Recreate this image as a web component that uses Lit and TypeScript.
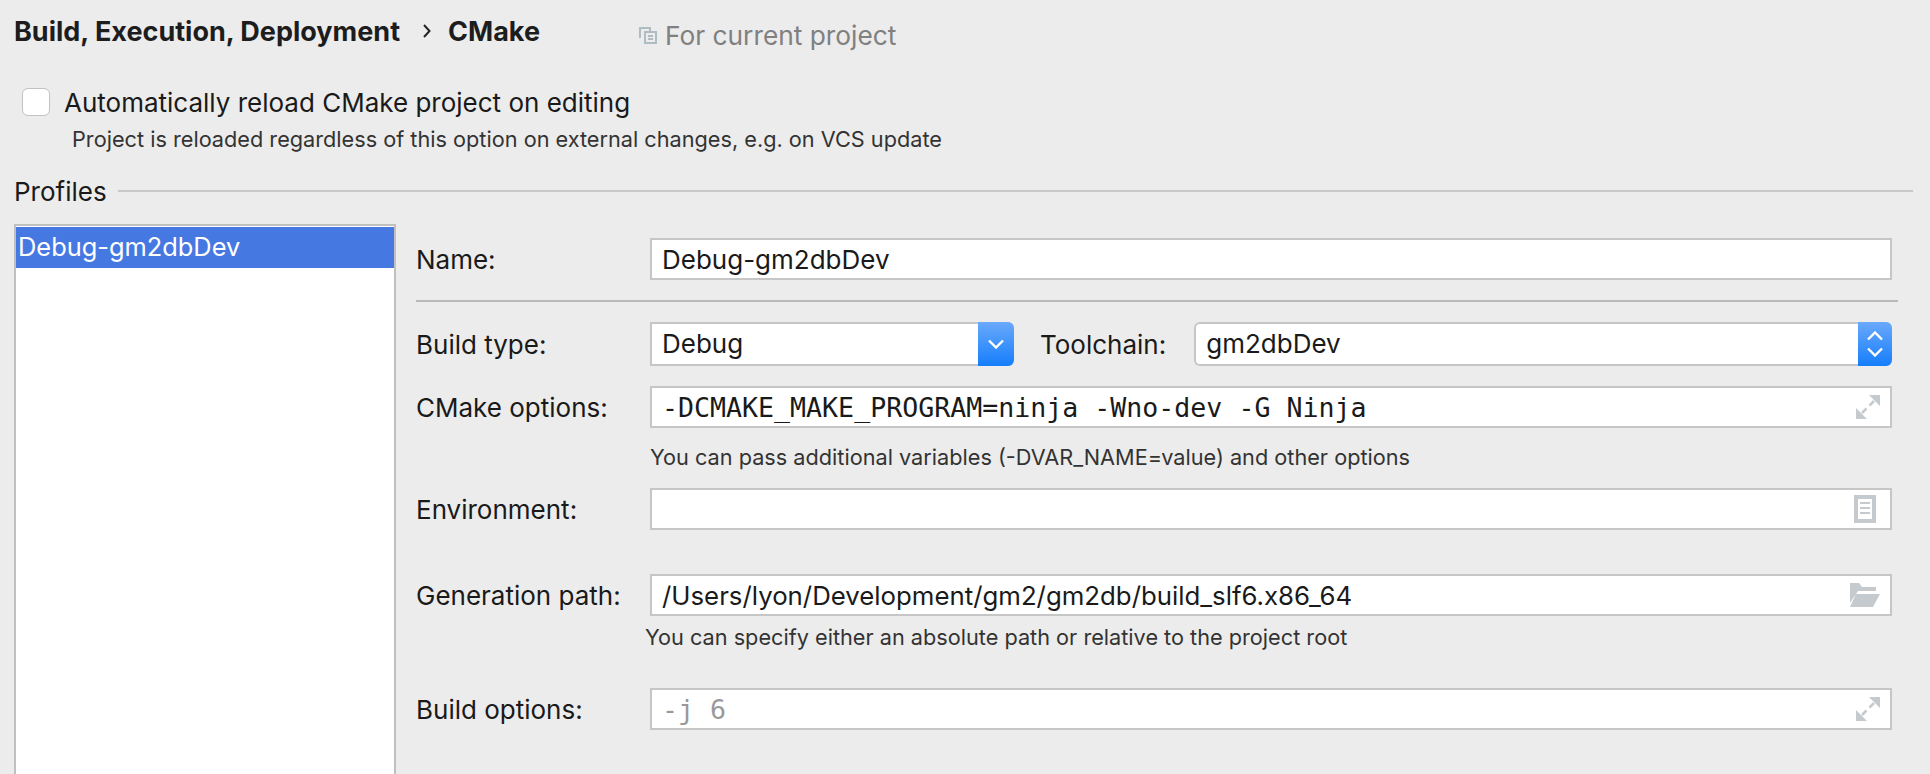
import { LitElement, html, css } from "lit";
import { customElement } from "lit/decorators.js";

const expand = html`<svg class="icon" width="24" height="24" viewBox="0 0 24 24"><path d="M13 0H24V11Z M0 13L11 24H0Z" fill="#c4cacd"/><path d="M18 6L13.5 10.5M6 18L10.5 13.5" stroke="#c4cacd" stroke-width="2.5" fill="none"/></svg>`;
const doc = html`<svg class="icon" width="22" height="28" viewBox="0 0 22 28"><path fill-rule="evenodd" d="M0 0H22V28H0Z M4 4V24H18V4Z" fill="#c4cacd"/><path d="M6 8H16M6 13H16M6 18H16" stroke="#c4cacd" stroke-width="2"/></svg>`;
const folder = html`<svg class="icon" width="30" height="24" viewBox="0 0 30 24"><path d="M0 0H9L12 4H26V8H8L0 20Z M6 11H30L23 24H0Z" fill="#c4cacd"/></svg>`;
const down = html`<svg width="16" height="10" viewBox="0 0 16 10"><path d="M1 1.5L8 8.5L15 1.5" stroke="#fff" stroke-width="2.4" fill="none"/></svg>`;
const up = html`<svg width="16" height="10" viewBox="0 0 16 10"><path d="M1 8.5L8 1.5L15 8.5" stroke="#fff" stroke-width="2.4" fill="none"/></svg>`;

@customElement("app-root")
export class AppRoot extends LitElement {
  static styles = css`
    :host { display: block; width: 1930px; height: 774px; overflow: hidden; background: #ececec; color: #1a1a1a;
      font-family: Inter, "Liberation Sans", sans-serif; font-size: 26px; }
    * { box-sizing: border-box; }
    .header { display: flex; align-items: center; height: 62px; padding-left: 14px; }
    .crumb { font-weight: 700; font-size: 27px; color: #1d1d1d; }
    .sep { margin: 0 17px 0 23px; display: block; }
    .scope { display: flex; align-items: center; margin: 8px 0 0 99px; color: #808080; font-size: 26.3px; }
    .scope svg { margin-right: 8px; }
    .check { display: flex; align-items: center; height: 28px; margin-top: 26px; padding-left: 22px; gap: 14px; }
    .box { width: 28px; height: 28px; border: 1px solid #c2c2c2; border-radius: 6px; background: #fff; }
    .sub { height: 28px; line-height: 28px; margin-top: 9px; padding-left: 72px; font-size: 21.7px; color: #333; }
    .group { display: flex; align-items: center; height: 28px; margin-top: 24px; padding: 0 17px 0 14px; gap: 11px; }
    .group i { flex: 1; height: 2px; background: #c8c8c8; }
    .body { display: flex; margin-top: 19px; height: 560px; }
    .list { width: 382px; margin-left: 14px; border: 2px solid #c0c0c0; border-bottom: 0; padding-top: 1px; background: #fff; }
    .sel { height: 41px; line-height: 40px; padding-left: 2px; background: #4678e2; color: #fff; font-size: 25.4px; }
    .form { width: 1482px; margin-left: 20px; padding-top: 14px; display: flex; flex-direction: column; }
    .row { display: flex; align-items: center; }
    .label { width: 234px; flex: none; }
    .field { flex: 1; height: 42px; margin-right: 6px; display: flex; align-items: center; justify-content: space-between;
      background: #fff; border: 2px solid #c6c6c6; padding: 0 10px 0 10px; }
    .mono { font-family: "DejaVu Sans Mono", monospace; font-size: 26.6px; }
    .muted { color: #999; }
    .doc { padding-right: 14px; }
    .path { font-size: 25.8px; }
    hr { height: 2px; border: 0; margin: 20px 0; width: 100%; background: #b9b9b9; }
    .h44 { height: 44px; }
    .select { display: flex; height: 44px; align-items: stretch; background: #fff; border: 2px solid #c6c6c6; border-right: 0; border-radius: 0 6px 6px 0; }
    .select.a { width: 364px; }
    .select.b { flex: 1; margin-right: 6px; border-radius: 6px; }
    .select span { flex: 1; padding-left: 10px; line-height: 40px; }
    .btn { width: 36px; margin: -2px 0; display: flex; flex-direction: column; align-items: center; justify-content: center; gap: 6px;
      border-radius: 0 6px 6px 0; background: linear-gradient(#6aa9fb, #157efb); }
    .select.b .btn { width: 34px; }
    .tool { margin: 0 28px 0 26px; }
    .hint { height: 28px; line-height: 28px; font-size: 21.7px; color: #333; }
    .h1 { margin: 15px 0 17px 234px; }
    .h2 { margin: 7px 0 37px 229px; }
    .gen { margin-top: 44px; }
    .gap { margin-top: 20px; }
  `;
  render() {
    return html`
      <div class="header">
        <span class="crumb">Build, Execution, Deployment</span>
        <svg class="sep" width="8" height="14" viewBox="0 0 8 14"><path d="M1 1L6.5 7L1 13" stroke="#222" stroke-width="2" fill="none"/></svg>
        <span class="crumb">CMake</span>
        <div class="scope">
          <svg width="18" height="17" viewBox="0 0 18 17"><path d="M1 11V1H11V4M6 5H17V16H6ZM9 9H14M9 12H14" stroke="#b0bcc4" stroke-width="2" fill="none"/></svg>
          For current project
        </div>
      </div>
      <div class="check"><div class="box"></div><span>Automatically reload CMake project on editing</span></div>
      <div class="sub">Project is reloaded regardless of this option on external changes, e.g. on VCS update</div>
      <div class="group"><span>Profiles</span><i></i></div>
      <div class="body">
        <div class="list"><div class="sel">Debug-gm2dbDev</div></div>
        <div class="form">
          <div class="row"><div class="label">Name:</div><div class="field">Debug-gm2dbDev</div></div>
          <hr />
          <div class="row h44">
            <div class="label">Build type:</div>
            <div class="select a"><span>Debug</span><div class="btn">${down}</div></div>
            <div class="tool">Toolchain:</div>
            <div class="select b"><span>gm2dbDev</span><div class="btn">${up}${down}</div></div>
          </div>
          <div class="row gap"><div class="label">CMake options:</div><div class="field"><span class="mono">-DCMAKE_MAKE_PROGRAM=ninja -Wno-dev -G Ninja</span>${expand}</div></div>
          <div class="hint h1">You can pass additional variables (-DVAR_NAME=value) and other options</div>
          <div class="row"><div class="label">Environment:</div><div class="field doc"><span></span>${doc}</div></div>
          <div class="row gen"><div class="label">Generation path:</div><div class="field"><span class="path">/Users/lyon/Development/gm2/gm2db/build_slf6.x86_64</span>${folder}</div></div>
          <div class="hint h2">You can specify either an absolute path or relative to the project root</div>
          <div class="row"><div class="label">Build options:</div><div class="field"><span class="mono muted">-j 6</span>${expand}</div></div>
        </div>
      </div>
    `;
  }
}
